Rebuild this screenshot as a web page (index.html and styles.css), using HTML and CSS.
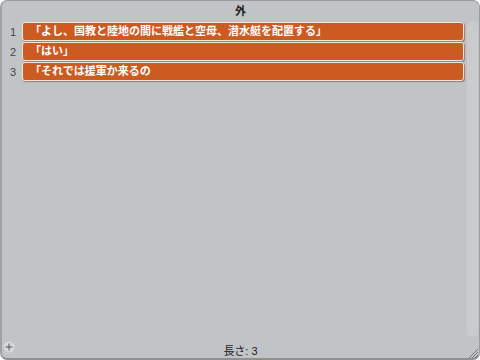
FILE: index.html
```html
<!DOCTYPE html>
<html lang="ja">
<head>
  <meta charset="UTF-8">
  <title>外</title>
  <link rel="stylesheet" href="styles.css">
</head>
<body>
  <div class="monitor">
    <div class="title">外</div>
    <div class="body">
      <div class="list">
        <div class="row"><span class="index">1</span><div class="item">「よし、国教と陸地の間に戦艦と空母、潜水艇を配置する」</div></div>
        <div class="row"><span class="index">2</span><div class="item">「はい」</div></div>
        <div class="row"><span class="index">3</span><div class="item">「それでは援軍か来るの</div></div>
      </div>
      <div class="scrollbar"></div>
    </div>
    <div class="footer">
      <span class="add">
        <svg width="12" height="12" viewBox="0 0 12 12">
          <circle cx="6" cy="6" r="5.5" fill="#d6d8da"/>
          <path d="M6 2.5v7M2.5 6h7" stroke="#555" stroke-width="1"/>
        </svg>
      </span>
      <span class="length">長さ: 3</span>
      <span class="grip">
        <svg width="10" height="10" viewBox="0 0 10 10">
          <path d="M10 1L1 10M10 4L4 10M10 7L7 10" stroke="#777" stroke-width="1"/>
        </svg>
      </span>
    </div>
  </div>
</body>
</html>
```

FILE: styles.css
```css
html, body { margin: 0; padding: 0; }
body { width: 480px; height: 360px; font-family: "Liberation Sans", "Noto Sans CJK JP", sans-serif; }
.monitor { box-sizing: border-box; width: 480px; height: 360px; background: #c1c4c7; border: 1px solid #9a9c9e; border-bottom: 2px solid #8e9092; border-left: 2px solid #a0a2a4; border-radius: 7px; display: flex; flex-direction: column; }
.title { height: 20px; line-height: 20px; text-align: center; font-size: 11px; font-weight: bold; color: #222; }
.body { flex: 1; display: flex; padding-left: 2px; padding-right: 1px; }
.list { flex: 1; display: flex; flex-direction: column; gap: 1px; padding-top: 1px; }
.row { display: flex; align-items: center; height: 19px; }
.index { width: 18px; text-align: center; font-size: 11px; color: #444; }
.item { flex: 1; box-sizing: border-box; height: 19px; line-height: 17px; margin-right: 3px; padding-left: 7px; background: #cc5b22; border: 1px solid #f4e6de; border-radius: 3px; box-shadow: 1px 1px 1px rgba(120,50,20,0.5); color: #fff; font-size: 11px; font-weight: bold; white-space: nowrap; overflow: hidden; }
.scrollbar { width: 11px; margin-bottom: 2px; background: #c9cbcd; border-radius: 5px; }
.footer { height: 19px; display: flex; align-items: center; position: relative; }
.add { position: absolute; left: 1px; top: 2px; display: flex; }
.length { flex: 1; text-align: center; font-size: 11px; color: #222; padding-top: 3px; }
.grip { position: absolute; right: 1px; bottom: 0; display: flex; }
```
